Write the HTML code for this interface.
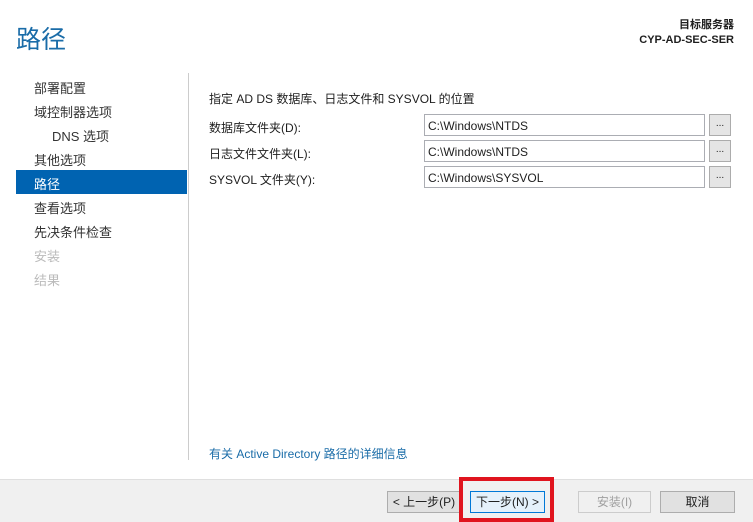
<!DOCTYPE html>
<html><head><meta charset="utf-8"><style>
*{margin:0;padding:0;box-sizing:border-box}
body{width:753px;height:522px;background:#fff;position:relative;font-family:"Liberation Sans","Noto Sans CJK SC",sans-serif;font-size:12px;color:#1e1e1e;overflow:hidden}
.a{position:absolute;white-space:nowrap}
.nav{left:34px;font-size:13px;color:#333}
.inp{position:absolute;left:424px;width:281px;height:22px;border:1px solid #abadb3;padding:4px 0 0 3px;font-size:12px}
.dots{position:absolute;left:709px;width:22px;height:22px;border:1px solid #acacac;background:#e5e5e5;font-size:10px;text-align:center;line-height:18px}
.btn{position:absolute;top:491px;height:22px;border:1px solid #adadad;background:#e1e1e1;font-size:12px;text-align:center;line-height:20px}
</style></head><body>
<div class="a" style="left:16px;top:20px;font-size:25px;color:#1a6ca8">路径</div>
<div class="a" style="right:19px;top:18px;font-size:11px;font-weight:bold;text-align:right;line-height:15px">目标服务器<br>CYP-AD-SEC-SER</div>
<div class="a nav" style="top:78px">部署配置</div>
<div class="a nav" style="top:102px">域控制器选项</div>
<div class="a nav" style="left:52px;top:126px">DNS 选项</div>
<div class="a nav" style="top:150px">其他选项</div>
<div class="a" style="left:16px;top:170px;width:171px;height:24px;background:#0063b1"></div>
<div class="a nav" style="top:174px;color:#fff">路径</div>
<div class="a nav" style="top:198px">查看选项</div>
<div class="a nav" style="top:222px">先决条件检查</div>
<div class="a nav" style="top:246px;color:#bbb">安装</div>
<div class="a nav" style="top:270px;color:#bbb">结果</div>
<div class="a" style="left:188px;top:73px;width:1px;height:387px;background:#ccc"></div>
<div class="a" style="left:209px;top:90px">指定 AD DS 数据库、日志文件和 SYSVOL 的位置</div>
<div class="a" style="left:209px;top:119px">数据库文件夹(D):</div>
<div class="a" style="left:209px;top:145px">日志文件文件夹(L):</div>
<div class="a" style="left:209px;top:171px">SYSVOL 文件夹(Y):</div>
<div class="inp" style="top:114px">C:\Windows\NTDS</div><div class="dots" style="top:114px">...</div>
<div class="inp" style="top:140px">C:\Windows\NTDS</div><div class="dots" style="top:140px">...</div>
<div class="inp" style="top:166px">C:\Windows\SYSVOL</div><div class="dots" style="top:166px">...</div>
<div class="a" style="left:209px;top:445px;color:#1a6ca8">有关 Active Directory 路径的详细信息</div>
<div class="a" style="left:0;top:479px;width:753px;height:43px;background:#f0f0f0;border-top:1px solid #dfdfdf"></div>
<div class="btn" style="left:387px;width:74px">&lt; 上一步(P)</div>
<div class="btn" style="left:470px;width:75px;border-color:#0078d7;background:#e5f1fb">下一步(N) &gt;</div>
<div class="btn" style="left:578px;width:73px;color:#a0a0a0;background:#f0f0f0;border-color:#ccc">安装(I)</div>
<div class="btn" style="left:660px;width:75px">取消</div>
<div class="a" style="left:459px;top:477px;width:95px;height:45px;border:4px solid #e0141e"></div>
</body></html>
